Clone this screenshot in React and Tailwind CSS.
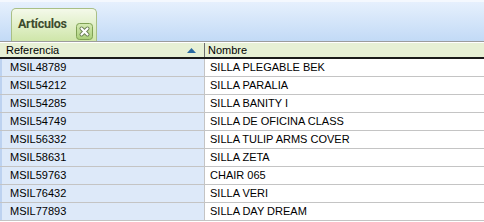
const rows = [
  ['MSIL48789', 'SILLA PLEGABLE BEK'],
  ['MSIL54212', 'SILLA PARALIA'],
  ['MSIL54285', 'SILLA BANITY I'],
  ['MSIL54749', 'SILLA DE OFICINA CLASS'],
  ['MSIL56332', 'SILLA TULIP ARMS COVER'],
  ['MSIL58631', 'SILLA ZETA'],
  ['MSIL59763', 'CHAIR 065'],
  ['MSIL76432', 'SILLA VERI'],
  ['MSIL77893', 'SILLA DAY DREAM'],
];

const CloseIcon = () => (
  <svg width="17" height="17" viewBox="0 0 17 17">
    <defs>
      <linearGradient id="cb" x1="0" y1="0" x2="0" y2="1">
        <stop offset="0" stopColor="#d6ebb4" />
        <stop offset="1" stopColor="#a9cf78" />
      </linearGradient>
    </defs>
    <rect x="0.5" y="0.5" width="16" height="16" rx="3" fill="url(#cb)" stroke="#7fa155" />
    <path d="M5.5 5.5 L11.5 11.5 M11.5 5.5 L5.5 11.5" stroke="#6b7f55" strokeWidth="4" strokeLinecap="round" />
    <path d="M5.5 5.5 L11.5 11.5 M11.5 5.5 L5.5 11.5" stroke="#ffffff" strokeWidth="2.2" strokeLinecap="round" />
  </svg>
);

export default function App() {
  return (
    <div className="w-[484px] h-[222px] overflow-hidden bg-white" style={{ fontFamily: '"Liberation Sans", Arial, sans-serif' }}>
      {/* Tab strip */}
      <div className="h-[42px] flex items-end pl-[11px] border-t-2 border-t-[#f4f8fe] bg-gradient-to-b from-[#e6f0fd] to-[#c2daf6] border-b border-b-[#9c9c9c]">
        <div className="w-[86px] h-[33px] flex items-start gap-[9px] pl-[6px] pt-[7px] rounded-t-[5px] border border-b-0 border-[#a9bf86] bg-gradient-to-b from-[#f4f9ea] to-[#cfe6a9]">
          <span className="text-[12.5px] leading-[16px] font-bold tracking-[-0.3px] text-[#3d4b2e] font-['Roboto',sans-serif]">Artículos</span>
          <span className="mt-[7px]"><CloseIcon /></span>
        </div>
      </div>

      {/* Header */}
      <div className="flex h-[17px] bg-[#e7f0d5] border-t border-t-white border-b-2 border-b-[#1a1a1a] text-[11px] text-black leading-[15px]">
        <div className="w-[205px] flex items-center justify-between pl-[6px] pr-[8px] border-r border-r-[#6e6e6e]">
          <span>Referencia</span>
          <svg width="9" height="5" viewBox="0 0 9 5"><path d="M0 5 L4.5 0 L9 5 Z" fill="#2a6aa1" /></svg>
        </div>
        <div className="pl-[3px] flex items-center">Nombre</div>
      </div>

      {/* Rows */}
      <div className="flex flex-col text-[11px] text-black">
        {rows.map(([ref, name]) => (
          <div key={ref} className="flex h-[18px] border-b border-b-[#c4c4c4]">
            <div className="w-[205px] flex items-center pl-[8px] bg-[#dde9f9] border-l-2 border-l-[#bdd2f0] border-r border-r-[#c4c4c4]">{ref}</div>
            <div className="flex-1 flex items-center pl-[5px]">{name}</div>
          </div>
        ))}
      </div>
    </div>
  );
}
